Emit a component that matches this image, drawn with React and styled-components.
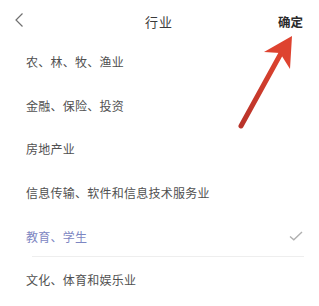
import React from 'react';
import styled, { createGlobalStyle } from 'styled-components';

const data = [
  '农、林、牧、渔业',
  '金融、保险、投资',
  '房地产业',
  '信息传输、软件和信息技术服务业',
  '教育、学生',
  '文化、体育和娱乐业'
];

const Global = createGlobalStyle`
  html, body { margin: 0; padding: 0; background: #fff; }
  body { font-family: "Noto Sans CJK SC", "Noto Sans", sans-serif; }
`;

const Page = styled.div`
  position: relative;
  width: 319px;
  height: 306px;
  overflow: hidden;
  background: #fff;
`;

const Header = styled.div`
  height: 40px;
  display: flex;
  align-items: center;
  justify-content: space-between;
  padding: 0 16px 0 14px;
  box-sizing: border-box;
`;

const Back = styled.div`
  width: 14px;
  display: flex;
  align-items: center;
`;

const Title = styled.div`
  font-size: 13px;
  color: #3a3a3a;
  letter-spacing: 1px;
  margin: 3px 0 0 12px;
`;

const Confirm = styled.div`
  font-size: 12.5px;
  font-weight: 700;
  color: #2a2a2a;
  margin-top: 3px;
`;

const List = styled.ul`
  list-style: none;
  margin: 0;
  padding: 0;
`;

const Row = styled.li`
  height: 43.6px;
  display: flex;
  align-items: center;
  justify-content: space-between;
  padding: 0 16px 0 26px;
  box-sizing: border-box;
  position: relative;
  font-size: 12px;
  letter-spacing: 0.25px;
  color: ${(p) => (p.$active ? '#7d86c2' : '#505050')};
  ${(p) =>
    p.$active &&
    `&::after {
      content: "";
      position: absolute;
      left: 32px;
      right: 15px;
      bottom: 1px;
      height: 1px;
      background: #eeeeee;
    }`}
`;

const Arrow = styled.svg`
  position: absolute;
  left: 0;
  top: 0;
  pointer-events: none;
`;

function App() {
  const active = '教育、学生';
  return (
    <Page>
      <Global />
      <Header>
        <Back>
          <svg width="10" height="16" viewBox="0 0 10 16">
            <path d="M8.5 1.5 L2 8 L8.5 14.5" fill="none" stroke="#707070" strokeWidth="1.2" />
          </svg>
        </Back>
        <Title>行业</Title>
        <Confirm>确定</Confirm>
      </Header>
      <List>
        {data.map((item) => (
          <Row key={item} $active={item === active}>
            <span>{item}</span>
            {item === active && (
              <svg width="14" height="10" viewBox="0 0 14 10">
                <path d="M1 5.5 L4.8 8.8 L13 1" fill="none" stroke="#b0b0b0" strokeWidth="1.4" />
              </svg>
            )}
          </Row>
        ))}
      </List>
      <Arrow width="319" height="306" viewBox="0 0 319 306">
        <defs>
          <linearGradient id="ar" x1="0" y1="1" x2="1" y2="0">
            <stop offset="0" stopColor="#b8332a" />
            <stop offset="1" stopColor="#e2452f" />
          </linearGradient>
        </defs>
        <line x1="241" y1="126" x2="285" y2="46" stroke="url(#ar)" strokeWidth="5" strokeLinecap="round" />
        <path d="M292 36 L264 52 L280 53 L290 69 Z" fill="#de4330" />
      </Arrow>
    </Page>
  );
}

export default App;
